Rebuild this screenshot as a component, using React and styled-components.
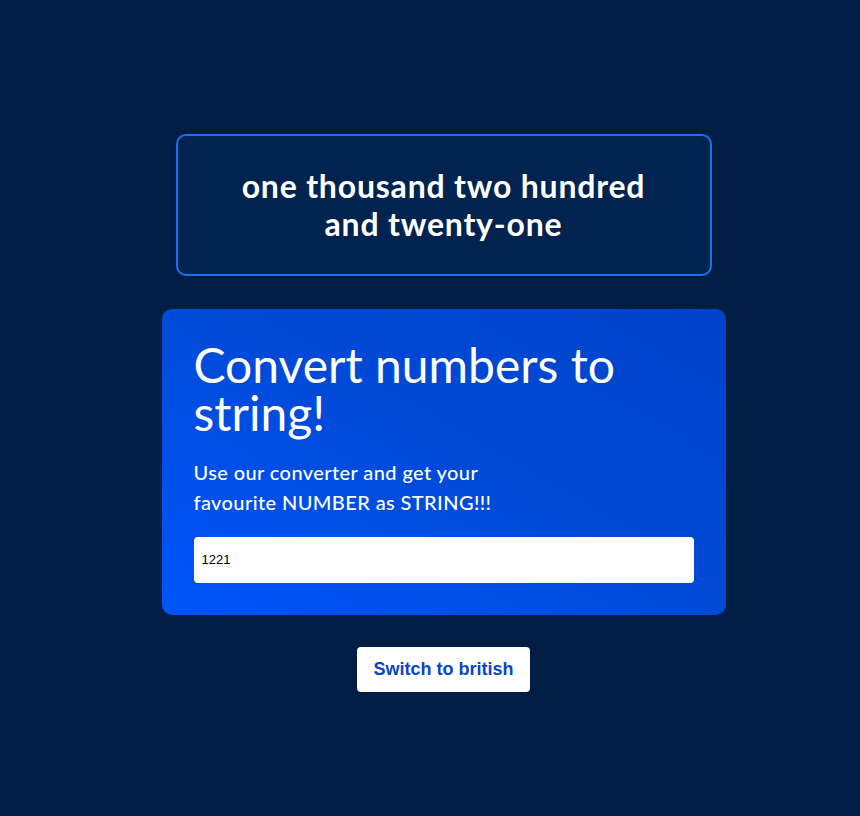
import React, { useState } from 'react';
import styled, { createGlobalStyle } from 'styled-components';

const GlobalStyle = createGlobalStyle`
  * { box-sizing: border-box; }
  body {
    margin: 0;
    background: #001e44;
    font-family: "Lato", "Open Sans", sans-serif;
  }
`;

const Page = styled.div`
  min-height: 100vh;
  display: flex;
  flex-direction: column;
  align-items: center;
  justify-content: center;
  padding-top: 9px;
  padding-left: 27px;
`;

const ResultBox = styled.div`
  width: 536px;
  padding: 31px 56px;
  background: #00234f;
  border: 2px solid #1a70ee;
  border-radius: 10px;
  color: #ffffff;
  font-size: 32px;
  font-weight: 700;
  line-height: 38px;
  letter-spacing: 0.8px;
  text-align: center;
`;

const Card = styled.div`
  width: 564px;
  margin-top: 33px;
  padding: 32px;
  border-radius: 10px;
  background: linear-gradient(30deg, #0056fb 0%, #004ad8 50%, #0043c8 100%);
  color: #ffffff;
`;

const Title = styled.h1`
  margin: 0;
  font-size: 48px;
  font-weight: 400;
  line-height: 48px;
`;

const Subtitle = styled.p`
  margin: 20px 0 0;
  max-width: 300px;
  font-size: 20px;
  line-height: 30px;
  font-weight: 500;
  letter-spacing: 0.4px;
`;

const NumberInput = styled.input`
  display: block;
  width: 100%;
  height: 46px;
  margin-top: 20px;
  padding: 0 8px;
  border: none;
  border-radius: 4px;
  background: #ffffff;
  color: #000000;
  font-family: "Liberation Sans", Arial, sans-serif;
  font-size: 13px;
  outline: none;
`;

const SwitchButton = styled.button`
  margin-top: 32px;
  height: 45px;
  padding: 0 16px;
  border: none;
  border-radius: 4px;
  background: #ffffff;
  color: #0a45c8;
  font-family: "Liberation Sans", Arial, sans-serif;
  font-size: 18px;
  font-weight: 700;
  cursor: pointer;
`;

export default function App() {
  const [value, setValue] = useState('1221');
  const [british, setBritish] = useState(false);

  return (
    <>
      <GlobalStyle />
      <Page>
        <ResultBox>one thousand two hundred and twenty-one</ResultBox>
        <Card>
          <Title>Convert numbers to string!</Title>
          <Subtitle>Use our converter and get your favourite NUMBER as STRING!!!</Subtitle>
          <NumberInput value={value} onChange={e => setValue(e.target.value)} />
        </Card>
        <SwitchButton onClick={() => setBritish(!british)}>
          {british ? 'Switch to american' : 'Switch to british'}
        </SwitchButton>
      </Page>
    </>
  );
}
